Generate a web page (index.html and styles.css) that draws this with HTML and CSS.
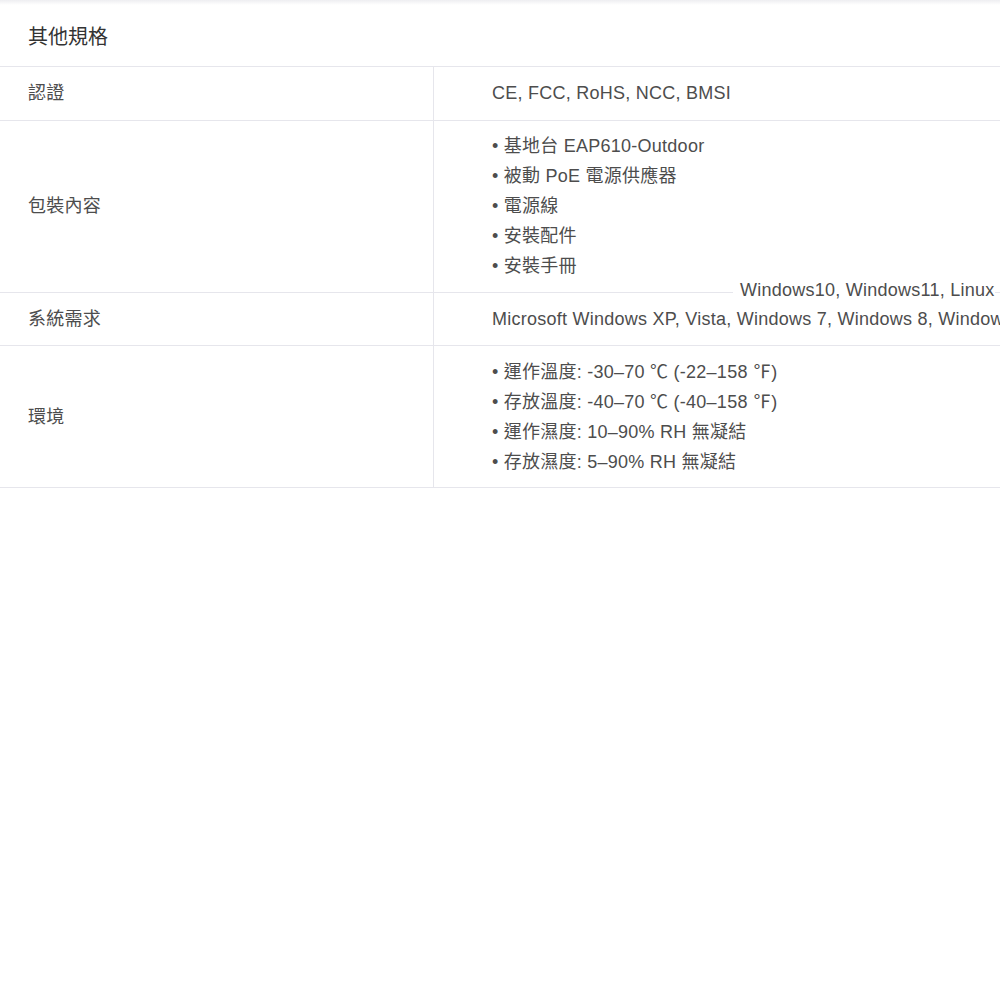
FILE: index.html
```html
<!DOCTYPE html>
<html lang="zh-Hant">
<head>
    <meta charset="UTF-8">
    <meta name="viewport" content="width=device-width, initial-scale=1.0">
    <title>其他規格</title>
    <link rel="stylesheet" href="styles.css">
</head>
<body>

    <div class="top-shade"></div>

    <!-- Spec Table -->
    <section class="spec">
        <h2 class="spec-title">其他規格</h2>

        <div class="spec-row">
            <div class="spec-name">認證</div>
            <div class="spec-value">CE, FCC, RoHS, NCC, BMSI</div>
        </div>

        <div class="spec-row">
            <div class="spec-name">包裝內容</div>
            <div class="spec-value">
                <ul class="spec-list">
                    <li>• 基地台 EAP610-Outdoor</li>
                    <li>• 被動 PoE 電源供應器</li>
                    <li>• 電源線</li>
                    <li>• 安裝配件</li>
                    <li>• 安裝手冊</li>
                </ul>
            </div>
        </div>

        <div class="spec-row">
            <div class="spec-name">系統需求</div>
            <div class="spec-value">
                Microsoft Windows XP, Vista, Windows 7, Windows 8, Windows10, Windows11, Linux
                <span class="spec-overflow">Windows10, Windows11, Linux</span>
            </div>
        </div>

        <div class="spec-row">
            <div class="spec-name">環境</div>
            <div class="spec-value">
                <ul class="spec-list">
                    <li>• 運作溫度: -30–70 ℃ (-22–158 ℉)</li>
                    <li>• 存放溫度: -40–70 ℃ (-40–158 ℉)</li>
                    <li>• 運作濕度: 10–90% RH 無凝結</li>
                    <li>• 存放濕度: 5–90% RH 無凝結</li>
                </ul>
            </div>
        </div>
    </section>

</body>
</html>
```

FILE: styles.css
```css
/* --- Base --- */
body {
    margin: 0;
    background-color: #ffffff;
    color: #4d4d4d;
    font-family: 'Liberation Sans', Arial, 'Noto Sans CJK TC', sans-serif;
    font-size: 18px;
    letter-spacing: 0.25px;
    overflow: hidden;
}

.top-shade {
    height: 5px;
    background: linear-gradient(#eeeef1, #ffffff);
}

/* --- Spec Table --- */
.spec-title {
    margin: 0;
    padding: 3px 28px 0;
    height: 58px;
    line-height: 58px;
    font-size: 20px;
    font-weight: 400;
    color: #333333;
    letter-spacing: 0;
    border-bottom: 1px solid #e6e6ec;
}

.spec-row {
    display: grid;
    grid-template-columns: 434px 1fr;
    border-bottom: 1px solid #e6e6ec;
    line-height: 30px;
}

.spec-name {
    display: flex;
    align-items: center;
    padding: 11.25px 28px;
    border-right: 1px solid #e6e6ec;
}

.spec-value {
    position: relative;
    padding: 11.25px 0 11.25px 58px;
    white-space: nowrap;
}

.spec-list {
    list-style: none;
    margin: -0.75px 0;
    padding: 0;
}

/* wrapped tail of the long line, drawn over the row border */
.spec-overflow {
    position: absolute;
    left: 299px;
    top: -18px;
    padding-left: 7px;
    background-color: #ffffff;
}
```
